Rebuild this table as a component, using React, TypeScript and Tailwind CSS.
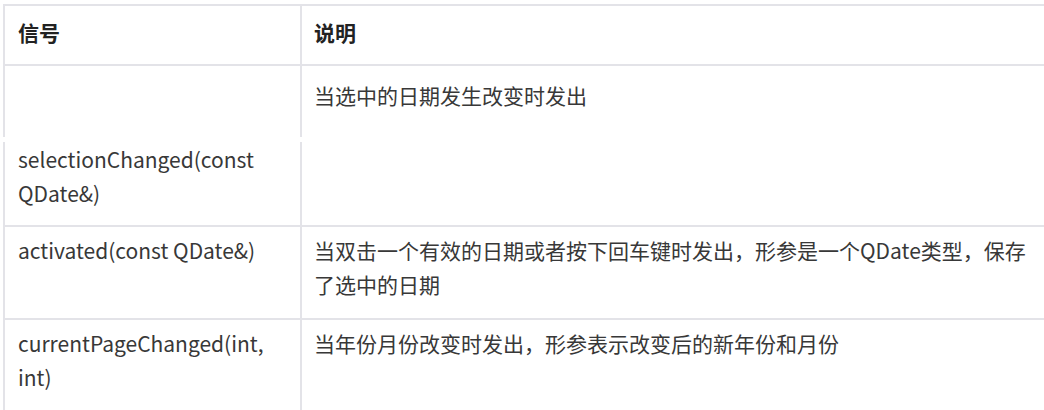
const font = { fontFamily: '"Noto Sans CJK SC", "Noto Sans", sans-serif' };

function Cell({ left, right, className = "" }: { left?: React.ReactNode; right?: React.ReactNode; className?: string }) {
  return (
    <div className={`flex ${className}`}>
      <div className="w-[299px] shrink-0 border-x-2 border-[#e3e3e8] px-[13px]">{left}</div>
      <div className="flex-1 pl-[12px]">{right}</div>
    </div>
  );
}

export default function App() {
  return (
    <div
      className="h-[410px] w-[1044px] overflow-hidden bg-white pl-[3px] pt-[4px] text-[21px] leading-[34px] text-[#383838]"
      style={font}
    >
      <Cell
        className="h-[62px] items-stretch border-y-2 border-[#e3e3e8] font-bold text-[#222] [&>div]:pt-[9px]"
        left="信号"
        right="说明"
      />
      <Cell className="h-[71px] [&>div]:pt-[12px]" right="当选中的日期发生改变时发出" />
      <div className="h-[5px]" />
      <Cell
        className="h-[85px] border-b-2 border-[#e3e3e8] [&>div]:pt-0"
        left={
          <>
            selectionChanged(const
            <br />
            QDate&amp;)
          </>
        }
      />
      <Cell
        className="h-[93px] border-b-2 border-[#e3e3e8] [&>div]:pt-[6px]"
        left="activated(const QDate&)"
        right={
          <>
            当双击一个有效的日期或者按下回车键时发出，形参是一个QDate类型，保存
            <br />
            了选中的日期
          </>
        }
      />
      <Cell
        className="h-[100px] [&>div]:pt-[6px]"
        left={
          <>
            currentPageChanged(int,
            <br />
            int)
          </>
        }
        right="当年份月份改变时发出，形参表示改变后的新年份和月份"
      />
    </div>
  );
}
